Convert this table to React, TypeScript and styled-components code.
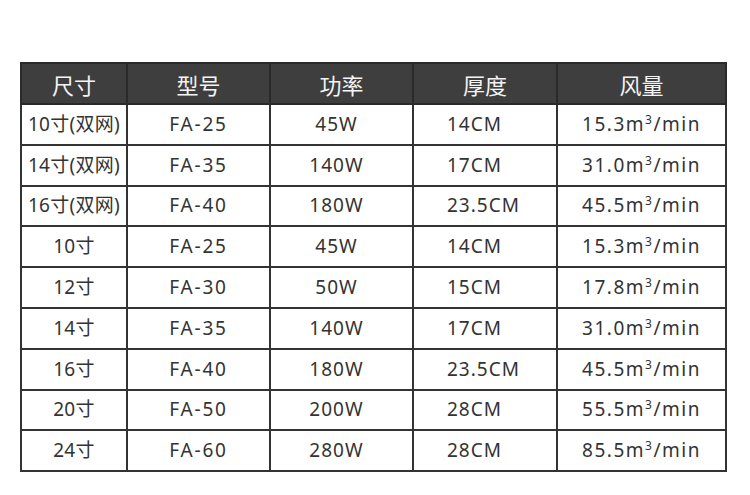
import React from 'react';
import styled, { createGlobalStyle } from 'styled-components';

const GlobalStyle = createGlobalStyle`
    html, body {
        margin: 0;
        padding: 0;
        background: #fff;
    }
    body {
        font-family: 'Noto Sans', 'Noto Sans CJK SC', sans-serif;
    }
`;

type Row = {
    size: string;
    model: string;
    power: string;
    thick: string;
    flow: string;
};

const rows: Row[] = [
    { size: '10寸(双网)', model: 'FA-25', power: '45W', thick: '14CM', flow: '15.3' },
    { size: '14寸(双网)', model: 'FA-35', power: '140W', thick: '17CM', flow: '31.0' },
    { size: '16寸(双网)', model: 'FA-40', power: '180W', thick: '23.5CM', flow: '45.5' },
    { size: '10寸', model: 'FA-25', power: '45W', thick: '14CM', flow: '15.3' },
    { size: '12寸', model: 'FA-30', power: '50W', thick: '15CM', flow: '17.8' },
    { size: '14寸', model: 'FA-35', power: '140W', thick: '17CM', flow: '31.0' },
    { size: '16寸', model: 'FA-40', power: '180W', thick: '23.5CM', flow: '45.5' },
    { size: '20寸', model: 'FA-50', power: '200W', thick: '28CM', flow: '55.5' },
    { size: '24寸', model: 'FA-60', power: '280W', thick: '28CM', flow: '85.5' },
];

const colWidths = [106, 143, 143, 144, 169];

const App: React.FC = () => {
    return (
        <Page>
            <GlobalStyle />
            <SpecTable>
                <colgroup>
                    {colWidths.map((w, i) => (
                        <col key={i} style={{ width: w }} />
                    ))}
                </colgroup>
                <thead>
                    <tr>
                        <HeadCell>尺寸</HeadCell>
                        <HeadCell>型号</HeadCell>
                        <HeadCell>功率</HeadCell>
                        <HeadCell>厚度</HeadCell>
                        <HeadCell>风量</HeadCell>
                    </tr>
                </thead>
                <tbody>
                    {rows.map((r, i) => (
                        <BodyRow key={i}>
                            <Cell $kind="size">{r.size}</Cell>
                            <Cell $kind="model">{r.model}</Cell>
                            <Cell $kind="power">{r.power}</Cell>
                            <Cell $kind="thick">{r.thick}</Cell>
                            <Cell $kind="flow">
                                {r.flow}m<Sup>3</Sup>/min
                            </Cell>
                        </BodyRow>
                    ))}
                </tbody>
            </SpecTable>
        </Page>
    );
};

const Page = styled.div`
    width: 750px;
    height: 495px;
    box-sizing: border-box;
    padding: 62px 0 0 20px;
`;

const SpecTable = styled.table`
    width: 705px;
    table-layout: fixed;
    border-collapse: collapse;
    border: 2px solid #2e2e2e;
`;

const HeadCell = styled.th`
    height: 39px;
    padding: 0;
    background: #3e3e3e;
    color: #f4f4f4;
    font-family: 'Noto Sans CJK SC', sans-serif;
    font-size: 22px;
    font-weight: 400;
    text-align: center;
    border: 2px solid #2a2a2a;
`;

const BodyRow = styled.tr`
    height: 40.8px;
`;

const Cell = styled.td<{ $kind: 'size' | 'model' | 'power' | 'thick' | 'flow' }>`
    padding: 0;
    color: #333;
    font-size: 19px;
    line-height: 1;
    white-space: nowrap;
    border: 2px solid #333;
    text-align: ${(p) => (p.$kind === 'thick' ? 'left' : 'center')};
    letter-spacing: ${(p) => (p.$kind === 'size' ? '0.3px' : p.$kind === 'flow' ? '1.5px' : p.$kind === 'model' ? '1.8px' : '1px')};
    padding-left: ${(p) => (p.$kind === 'thick' ? '33px' : '0')};
    padding-right: ${(p) => (p.$kind === 'power' ? '10px' : '0')};
`;

const Sup = styled.sup`
    font-size: 12px;
    vertical-align: 7px;
    line-height: 0;
`;

export default App;
